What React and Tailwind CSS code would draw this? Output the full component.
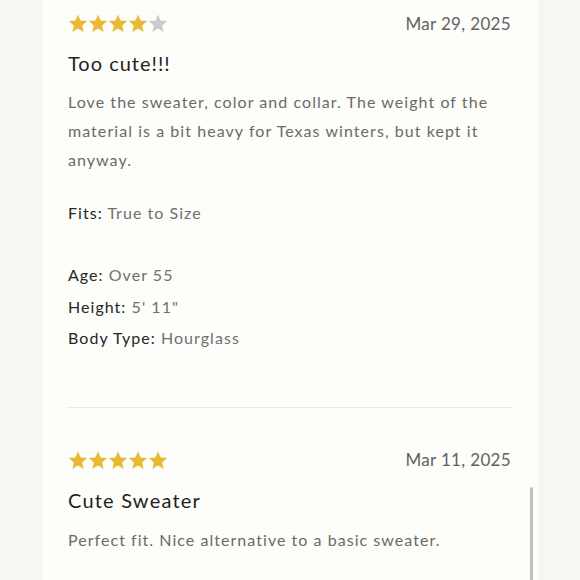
import React from "react";

const Star = ({ filled }) => (
  <svg width="20" height="19" viewBox="0 0 24 23" className="block">
    <polygon
      points="12,0.5 15.1,8 23.2,8.6 17,13.9 18.9,21.8 12,17.6 5.1,21.8 7,13.9 0.8,8.6 8.9,8"
      fill={filled ? "#e9b935" : "#cbcbcb"}
    />
  </svg>
);

const Stars = ({ n }) => (
  <div className="flex">
    {[0, 1, 2, 3, 4].map((i) => (
      <Star key={i} filled={i < n} />
    ))}
  </div>
);

export default function App() {
  const font = { fontFamily: "Lato, 'Noto Sans', sans-serif" };
  return (
    <div
      className="relative w-[580px] h-[580px] overflow-hidden bg-[#f6f6f2]"
      style={font}
    >
      <div className="ml-[43px] w-[495px] h-full bg-[#fdfdf9] pl-[25px] pr-[27px] pt-[14px]">
        {/* Review 1 */}
        <div className="flex items-center justify-between h-[19px]">
          <Stars n={4} />
          <span className="text-[17px] tracking-[0.02em] text-[#626262]">
            Mar 29, 2025
          </span>
        </div>
        <h2 className="mt-[16px] text-[20px] leading-[28px] tracking-[0.05em] text-[#1f1f1f]">
          Too cute!!!
        </h2>
        <p className="mt-[10px] text-[16px] leading-[29px] tracking-[0.066em] text-[#6a6a6a]">
          Love the sweater, color and collar. The weight of the material is a
          bit heavy for Texas winters, but kept it anyway.
        </p>
        <div className="mt-[24px] text-[16px] leading-[29px] tracking-[0.065em]">
          <span className="text-[#262626]">Fits:</span>
          <span className="text-[#707070]"> True to Size</span>
        </div>
        <div className="mt-[32px] text-[16px] leading-[31.5px] tracking-[0.065em]">
          <div>
            <span className="text-[#262626]">Age:</span>
            <span className="text-[#707070]"> Over 55</span>
          </div>
          <div>
            <span className="text-[#262626]">Height:</span>
            <span className="text-[#707070]"> 5' 11"</span>
          </div>
          <div>
            <span className="text-[#262626]">Body Type:</span>
            <span className="text-[#707070]"> Hourglass</span>
          </div>
        </div>
        <div className="mt-[53px] border-t border-dotted border-[#d6d6d2]" />

        {/* Review 2 */}
        <div className="mt-[43px] flex items-center justify-between h-[19px]">
          <Stars n={5} />
          <span className="text-[17px] tracking-[0.02em] text-[#626262]">
            Mar 11, 2025
          </span>
        </div>
        <h2 className="mt-[16px] text-[20px] leading-[28px] tracking-[0.06em] text-[#1f1f1f]">
          Cute Sweater
        </h2>
        <p className="mt-[11px] text-[16px] leading-[29px] tracking-[0.065em] text-[#6a6a6a]">
          Perfect fit. Nice alternative to a basic sweater.
        </p>
      </div>
      <div className="absolute left-[530px] top-[487px] w-[3px] h-[100px] rounded-full bg-[#bdbdbb]" />
    </div>
  );
}
